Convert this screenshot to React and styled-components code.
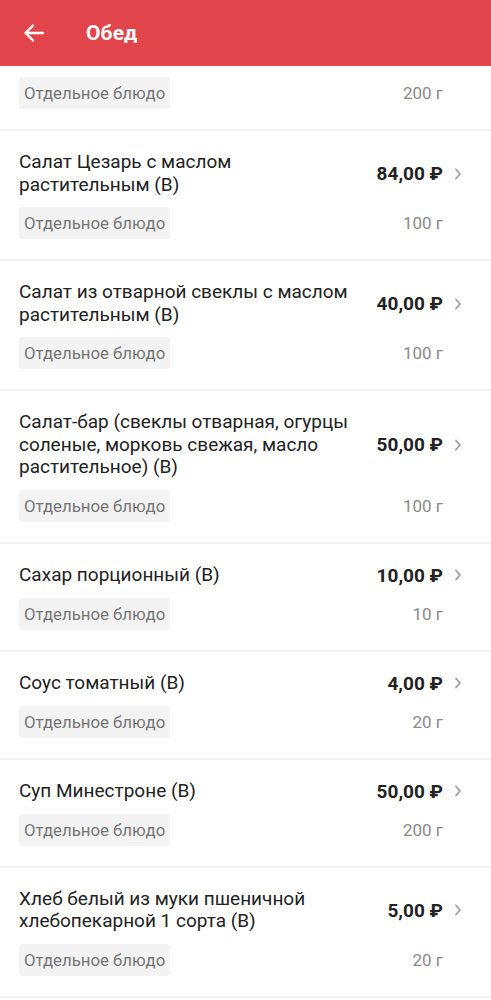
import React from 'react';
import styled, { createGlobalStyle } from 'styled-components';

const GlobalStyle = createGlobalStyle`
	html, body {
		margin: 0;
		padding: 0;
		background: #fff;
		font-family: Roboto, "Noto Sans", sans-serif;
	}
`;

const Page = styled.div`
	width: 491px;
	height: 1000px;
	overflow: hidden;
	display: flex;
	flex-direction: column;
	background: #fff;
`;

const Header = styled.header`
	height: 66px;
	flex: none;
	background: #e1444a;
	display: flex;
	align-items: center;
	padding-left: 22px;
	gap: 40px;
	color: #fff;
`;

const BackButton = styled.button`
	border: 0;
	background: none;
	padding: 0;
	width: 24px;
	height: 24px;
	display: flex;
	align-items: center;
	justify-content: center;
	color: #fff;
`;

const Title = styled.h1`
	margin: 0;
	font-size: 21px;
	font-weight: 700;
	letter-spacing: 0.1px;
`;

const List = styled.div`
	display: flex;
	flex-direction: column;
`;

const Item = styled.div`
	display: flex;
	flex-direction: column;
	gap: 11px;
	padding: ${p => (p.$cut ? '11px' : '20px')} 48px 20px 19px;
	border-bottom: 2px solid #f2f2f2;
`;

const TopRow = styled.div`
	display: flex;
	align-items: center;
	justify-content: space-between;
`;

const Name = styled.div`
	font-size: 19px;
	line-height: 22.5px;
	color: #222;
	max-width: 336px;
`;

const PriceBox = styled.div`
	display: flex;
	align-items: center;
	gap: 11px;
	margin-right: -19px;
`;

const Price = styled.div`
	font-size: 19px;
	font-weight: 700;
	color: #222;
	white-space: nowrap;
`;

const BottomRow = styled.div`
	display: flex;
	align-items: center;
	justify-content: space-between;
`;

const Tag = styled.span`
	background: #f3f3f3;
	border-radius: 3px;
	padding: 0 5px;
	height: 32px;
	line-height: 32px;
	font-size: 16.8px;
	color: #757575;
`;

const Weight = styled.span`
	font-size: 17px;
	color: #8a8a8a;
`;

const items = [
	{ name: 'Салат Цезарь с маслом растительным (В)', price: '84,00', weight: '100 г' },
	{ name: 'Салат из отварной свеклы с маслом растительным (В)', price: '40,00', weight: '100 г' },
	{ name: 'Салат-бар (свеклы отварная, огурцы соленые, морковь свежая, масло растительное) (В)', price: '50,00', weight: '100 г' },
	{ name: 'Сахар порционный (В)', price: '10,00', weight: '10 г' },
	{ name: 'Соус томатный (В)', price: '4,00', weight: '20 г' },
	{ name: 'Суп Минестроне (В)', price: '50,00', weight: '200 г' },
	{ name: 'Хлеб белый из муки пшеничной хлебопекарной 1 сорта (В)', price: '5,00', weight: '20 г' }
];

const Chevron = () => (
	<svg width="8" height="12" viewBox="0 0 8 12" fill="none">
		<path d="M2 1.5 L6 6 L2 10.5" stroke="#9e9e9e" strokeWidth="1.8" strokeLinecap="round" strokeLinejoin="round" />
	</svg>
);

const MenuItem = ({ name, price, weight }) => (
	<Item>
		<TopRow>
			<Name>{name}</Name>
			<PriceBox>
				<Price>{price} ₽</Price>
				<Chevron />
			</PriceBox>
		</TopRow>
		<BottomRow>
			<Tag>Отдельное блюдо</Tag>
			<Weight>{weight}</Weight>
		</BottomRow>
	</Item>
);

export default function App() {
	return (
		<Page>
			<GlobalStyle />
			<Header>
				<BackButton aria-label="Назад">
					<svg width="22" height="20" viewBox="0 0 22 20" fill="none">
						<path d="M20 10 H3 M10 2.5 L2.5 10 L10 17.5" stroke="#fff" strokeWidth="2.4" strokeLinecap="round" strokeLinejoin="round" />
					</svg>
				</BackButton>
				<Title>Обед</Title>
			</Header>
			<List>
				<Item $cut>
					<BottomRow>
						<Tag>Отдельное блюдо</Tag>
						<Weight>200 г</Weight>
					</BottomRow>
				</Item>
				{items.map(item => <MenuItem key={item.name} {...item} />)}
			</List>
		</Page>
	);
}
